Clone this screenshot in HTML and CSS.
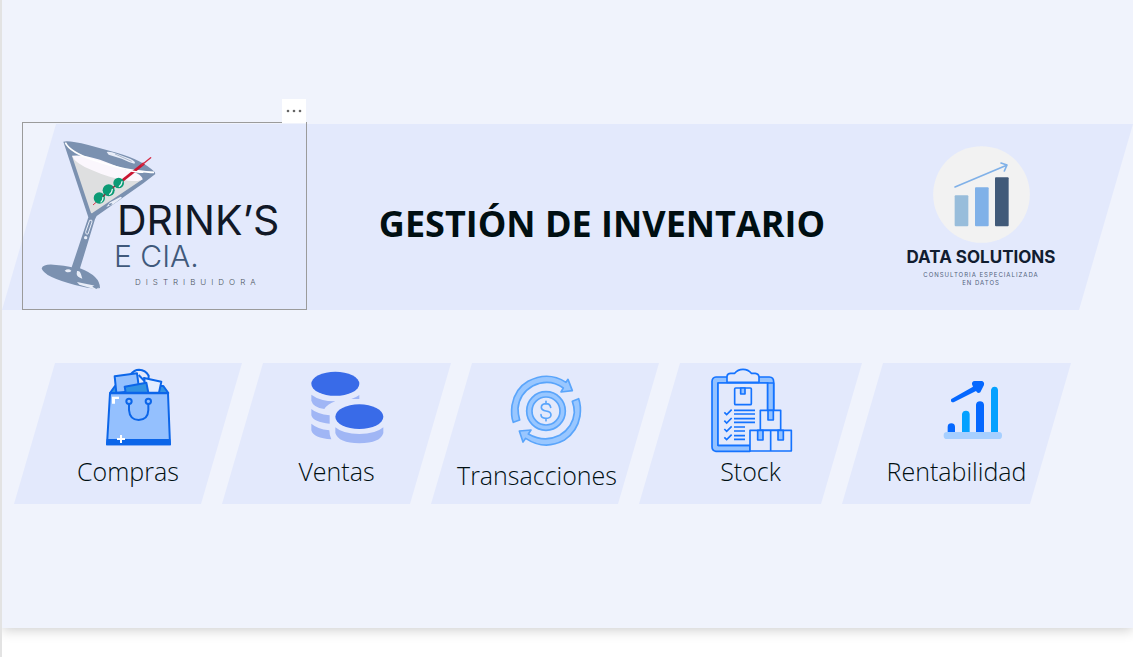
FILE: index.html
```html
<!DOCTYPE html>
<html lang="es">
<head>
<meta charset="utf-8">
<meta name="viewport" content="width=device-width, initial-scale=1">
<title>Gestión de Inventario</title>
<link rel="stylesheet" href="styles.css">
</head>
<body>
<main class="canvas">
  <header class="banner">
    <div class="visual">
      <button class="visual-menu" type="button" aria-label="Más opciones">
        <svg width="16" height="4" viewBox="0 0 16 4" aria-hidden="true"><circle cx="2" cy="2" r="1.3"/><circle cx="8" cy="2" r="1.3"/><circle cx="14" cy="2" r="1.3"/></svg>
      </button>
      <svg class="drinks" viewBox="0 0 283 186" role="img" aria-label="Drink's e Cia. Distribuidora">
        <g transform="translate(-23 -33) scale(.33333)">
          <path fill="#7b91b0" d="M190 155Q205 150 265 165L350 188Q430 211 464 246L466 252L430 280L290 378L285 388L240 535Q300 558 300 594Q285 600 225 585Q130 560 125 535Q130 522 160 524Q195 526 215 532L265 382Z"/>
          <path fill="#dedfe0" d="M216 198L428 268L278 368Q274 372 272 366Z"/>
          <path fill="#fbf7fd" d="M216 197Q250 193 300 209L375 238Q425 250 428 268Q418 276 385 272Q330 265 275 240Q225 220 216 197Z"/>
          <path fill="none" stroke="#fff" stroke-width="5" d="M196 158Q210 187 282 211T400 241T462 247"/>
          <path fill="#e8edf8" d="M320 186Q330 184 352 192L392 207Q410 216 403 221Q385 216 365 206L326 194Z"/>
          <path fill="none" stroke="#8c9db7" stroke-width="2" d="M345 192L395 214"/>
          <path fill="#e8edf8" d="M319 351L330 337L362 320L366 323L340 343Z"/>
          <path fill="#7b91b0" d="M326 343l8-4l3 3l-8 5z"/>
          <path fill="none" stroke="#e8edf8" stroke-width="3" d="M269 391Q278 388 276 396L264 432Q257 435 257 425Z"/>
          <circle cx="257" cy="443" r="5" fill="#e8edf8"/>
          <path fill="#e8edf8" d="M194 542Q205 534 214 542Q211 548 199 546ZM231 543Q240 541 243 553L247 566Q231 561 230 552ZM231 576L286 587L298 595L284 598L238 584Z"/>
          <path fill="#7b91b0" d="M277 590q9-6 10-9l10 10l-8 6z"/>
          <path fill="none" stroke="#d9374b" stroke-width="3" d="M279 345L365 270"/>
          <path fill="none" stroke="#c91532" stroke-width="8" d="M364 274L432 220"/>
          <path fill="none" stroke="#d52a43" stroke-width="4" stroke-linecap="round" d="M425 225L452 203"/>
          <path fill="none" stroke="#fff" stroke-width="4" d="M380 240Q410 247 430 247"/>
          <g fill="#0b9b75"><circle cx="298" cy="324" r="17"/><circle cx="326" cy="301" r="18"/><circle cx="356" cy="279" r="16"/></g>
          <g fill="none" stroke="#e3f2f0" stroke-width="4" stroke-linecap="round"><path d="M309 322q0 10-6 14M337 298q-1 10-8 15M366 275q-1 10-8 14"/></g>
          <path fill="none" stroke="#8b3442" stroke-width="4" d="M309 320l7-7M338 294l7-6"/>
        </g>
        <text class="drinks-name" x="94" y="112">DRINK’S</text>
        <text class="drinks-sub" x="91" y="144">E CIA.</text>
        <text class="drinks-tag" x="112" y="162">DISTRIBUIDORA</text>
      </svg>
    </div>
    <h1 class="title">GESTIÓN DE INVENTARIO</h1>
    <div class="brand">
      <svg class="brand-mark" viewBox="127 95 291 291" aria-hidden="true">
        <circle cx="272.500" cy="240.500" r="145" fill="#f2f2f2"/>
        <rect x="192" y="243" width="41" height="93" rx="3" fill="#98bddb"/>
        <rect x="253" y="219" width="41" height="117" rx="3" fill="#80b1e8"/>
        <rect x="313" y="189" width="41" height="147" rx="3" fill="#415a79"/>
        <path fill="none" stroke="#80b1e8" stroke-width="5" stroke-linecap="round" stroke-linejoin="round" d="M193 218L348 153M331 146L349 152L341 170"/>
      </svg>
      <p class="brand-name">DATA SOLUTIONS</p>
      <p class="brand-tag">CONSULTORIA ESPECIALIZADA<br>EN DATOS</p>
    </div>
  </header>

  <nav class="tiles" aria-label="Secciones">
    <a class="tile" href="#compras">
      <svg class="tile-icon" viewBox="-36 9 360 288" aria-hidden="true">
        <g stroke="#0c66e9" stroke-width="6" stroke-linejoin="round">
          <path fill="#3292e3" d="M90 99L105 78H250L265 99Z"/>
          <path fill="#e3e9fb" d="M151 44Q163 29 177 29Q197 30 206 47L204 80H155Z"/>
          <path fill="#94c0fe" d="M104 49L171 40L178 92L109 98Z"/>
          <path fill="#e3edff" d="M192 54L244 65L237 98H199Z"/>
          <path fill="none" d="M176 45l18 19"/>
          <path fill="#3292e3" d="M134 80L199 68L205 98H137Z"/>
          <path fill="#94c0fe" d="M90 100H264L270 253H81Z"/>
        </g>
        <path fill="#0c66e9" d="M80 237H271L273 256H78Z"/>
        <g fill="none" stroke="#0c66e9" stroke-width="6"><circle cx="147" cy="124" r="8"/><circle cx="205" cy="124" r="8"/><path d="M147 132V150Q149 179 176 180Q204 179 205 150V132"/></g>
        <path fill="#fff" d="M96 110H117V117H105V131H96ZM120 225h6v9h9v6h-9v9h-6v-9h-9v-6h9z"/>
      </svg>
      <span class="tile-label">Compras</span>
    </a>
    <a class="tile" href="#ventas">
      <svg class="tile-icon" viewBox="-40 9 360 288" aria-hidden="true">
        <g fill="#a0b6f5">
          <path d="M63 104Q88 123 135 124Q112 132 102 147Q68 142 63 122ZM183 117Q196 113 207 105V117Z"/>
          <path d="M63 147Q80 162 118 166V191Q69 187 63 166Z"/>
          <path d="M63 191Q80 206 117 211Q117 225 123 238Q69 235 63 211Z"/>
          <path d="M135 202Q158 222 207 222T279 202V219Q271 249 207 250Q144 249 135 219Z"/>
        </g>
        <g fill="#396be8"><ellipse cx="135" cy="71.500" rx="72" ry="36"/><ellipse cx="207" cy="170" rx="72" ry="37"/></g>
      </svg>
      <span class="tile-label">Ventas</span>
    </a>
    <a class="tile" href="#transacciones">
      <svg class="tile-icon" viewBox="106 9 360 288" aria-hidden="true">
        <g fill="#99c7ff" stroke="#5aa5fb" stroke-width="5" stroke-linejoin="round">
          <path d="M191 187Q183 168 187 136Q196 86 235 64Q295 32 349 67L355 58L368 92L334 96L341 84Q298 54 249 78Q209 101 205 145Q205 164 210 180Z"/>
          <path d="M387 116Q395 138 391 168Q383 215 343 241Q284 272 228 235L220 246L209 213L244 210L236 222Q284 249 330 226Q370 202 374 158Q374 140 368 124Z"/>
          <circle cx="289" cy="153" r="58"/>
          <circle cx="289" cy="153" r="42" fill="#e3e9fb"/>
        </g>
        <path fill="none" stroke="#5aa5fb" stroke-width="5" stroke-linecap="round" d="M303 142Q301 131 289 131Q275 132 275 142Q275 151 289 153Q304 155 304 165Q303 175 289 175Q274 174 274 164M289 124V131M289 175V182"/>
      </svg>
      <span class="tile-label tile-label--long">Transacciones</span>
    </a>
    <a class="tile" href="#stock">
      <svg class="tile-icon" viewBox="9 9 360 288" aria-hidden="true">
        <g stroke="#1473ff" stroke-width="5" stroke-linejoin="round">
          <path fill="#94c2ff" d="M84 51H244Q257 52 257 65V180H239V69H90V256H186V274H84Q72 272 72 260V64Q73 52 84 51Z"/>
          <path fill="#e3e9fb" d="M90 69H239V256H90Z"/>
          <path fill="#94c2ff" d="M239 69H257V180H239Z"/>
          <path fill="#e3e9fb" d="M117 67V49Q118 40 128 40H140Q149 28 165 28T190 40H202Q212 41 213 50V67Z"/>
          <rect x="140" y="84" width="50" height="50" rx="3" fill="#e3e9fb"/>
          <path fill="#94c2ff" d="M158 84H171V102H158Z"/>
          <path fill="#e3e9fb" d="M217 151H278V211H217Z"/>
          <path fill="#94c2ff" d="M240 151H256V180H240Z"/>
          <path fill="#e3e9fb" d="M186 211H248V273H186ZM248 211H310V273H248Z"/>
          <path fill="#94c2ff" d="M209 211H225V240H209ZM270 211H286V240H270Z"/>
        </g>
        <path fill="none" stroke="#1473ff" stroke-width="5" d="M109 157l7 7l15-15M109 182l7 7l15-15M109 207l7 7l15-15M109 232l7 7l15-15M138 151h63M138 162h63M138 176h63M138 187h63M138 201h33M138 213h33M138 227h33M138 238h33"/>
      </svg>
      <span class="tile-label">Stock</span>
    </a>
    <a class="tile" href="#rentabilidad">
      <svg class="tile-icon" viewBox="51 12 360 288" aria-hidden="true">
        <rect x="191" y="219" width="175" height="21" rx="10" fill="#a6cfff"/>
        <path fill="#0568ff" d="M203 219V203Q204 193 214 193T225 203V219ZM288 219V137Q290 127 300 127T312 137V219Z"/>
        <path fill="#04a1ff" d="M246 219V165Q248 155 258 155T269 165V219ZM333 219V93Q335 83 344 83T354 93V219Z"/>
        <path fill="#0568ff" d="M214 120L279 83L276 76Q275 67 284 66H304Q314 67 312 78L301 100Q293 105 288 96L221 130Q212 131 213 122Z"/>
      </svg>
      <span class="tile-label">Rentabilidad</span>
    </a>
  </nav>
</main>
</body>
</html>
```
FILE: styles.css
```css
* {
  box-sizing: border-box;
}

body {
  margin: 0;
  min-height: 100vh;
  border-left: 2px solid #e3e3e3;
  background: #fff;
  font-family: "Open Sans", "Noto Sans", sans-serif;
  color: #000f12;
}

.canvas {
  padding: 122px 0 124px;
  background: #f0f3fc;
  box-shadow: 0 2px 12px rgba(0, 0, 0, 0.2);
}

.banner {
  position: relative;
  display: grid;
  grid-template-columns: 285px 1fr 168px;
  align-items: center;
  padding: 0 68px 0 20px;
}

.banner::before {
  content: "";
  position: absolute;
  inset: 2px 0 0;
  background: #e3e9fc;
  clip-path: polygon(54px 0, 100% 0, calc(100% - 54px) 100%, 0 100%);
}

.visual {
  position: relative;
  border: 1px solid #9b9b9b;
}

.visual-menu {
  position: absolute;
  right: 0;
  bottom: 100%;
  display: flex;
  align-items: center;
  justify-content: center;
  width: 24px;
  height: 24px;
  padding: 0;
  border: 0;
  background: #fff;
  fill: #666;
}

.drinks {
  display: block;
  width: 100%;
  font-family: Inter, "Liberation Sans", sans-serif;
}

.drinks-name {
  font-size: 41px;
  fill: #111827;
}

.drinks-sub {
  font-size: 30px;
  font-weight: 300;
  fill: #40597b;
}

.drinks-tag {
  font-size: 8px;
  font-weight: 300;
  letter-spacing: 5px;
  fill: #4c5361;
}

.title {
  position: relative;
  margin: 0;
  padding-top: 16px;
  font-size: 36px;
  line-height: 48px;
  font-weight: 700;
  text-align: center;
}

.brand {
  position: relative;
  display: flex;
  flex-direction: column;
  align-items: center;
  font-family: Inter, "Liberation Sans", sans-serif;
  text-align: center;
  white-space: nowrap;
}

.brand-mark {
  width: 97px;
  height: 97px;
}

.brand-name {
  margin: 4px 0;
  font-size: 17px;
  line-height: 20px;
  font-weight: 700;
  color: #111d30;
}

.brand-tag {
  margin: 0;
  font-size: 6px;
  line-height: 8px;
  letter-spacing: 1px;
  color: #52627c;
}

.tiles {
  display: grid;
  grid-template-columns: 208fr 209fr 208fr 203fr 209fr;
  margin-top: 53px;
  padding: 0 82px 0 12px;
}

.tile {
  display: flex;
  flex-direction: column;
  align-items: center;
  height: 141px;
  margin-right: -20px;
  background: #e3e9fc;
  clip-path: polygon(41px 0, 100% 0, calc(100% - 41px) 100%, 0 100%);
  color: inherit;
  text-decoration: none;
}

.tile-icon {
  width: 120px;
  height: 96px;
  flex: none;
}

.tile-label {
  margin-top: -6px;
  font-size: 25px;
  line-height: 36px;
  font-weight: 300;
}

.tile-label--long {
  margin-top: -2px;
  padding-right: 16px;
}
```
